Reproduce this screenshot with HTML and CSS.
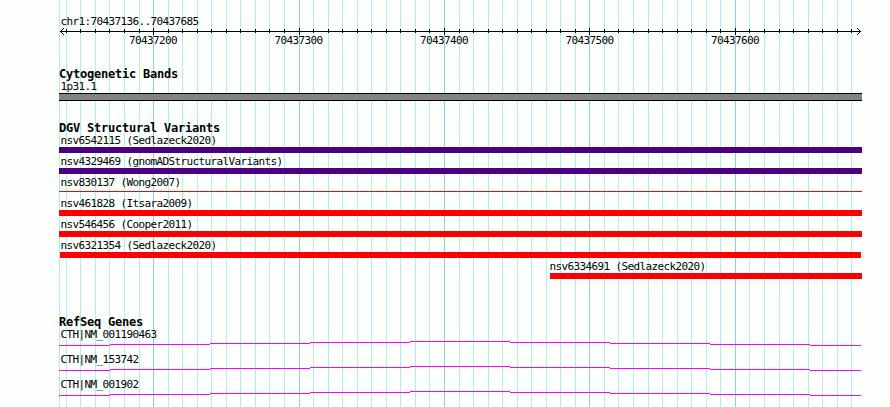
FILE: index.html
```
<!DOCTYPE html>
<html lang="en">
<head>
    <meta charset="UTF-8">
    <title>chr1:70437136..70437685</title>
    <link rel="stylesheet" href="styles.css">
</head>
<body>
    <div class="browser">
        <svg class="grid" width="890" height="407" shape-rendering="crispEdges">
            <path id="grid-minor" class="minor"/>
            <path id="grid-major" class="major"/>
        </svg>

        <div class="ruler">
            <div class="label region">chr1:70437136..70437685</div>
            <svg class="axis" width="803" height="7" shape-rendering="crispEdges">
                <path d="M1 3.5H802"/>
                <path id="ticks"/>
                <path d="M2 2.5h1M3 1.5h1M4 0.5h1M2 4.5h1M3 5.5h1M4 6.5h1"/>
                <path d="M800 2.5h1M799 1.5h1M798 0.5h1M800 4.5h1M799 5.5h1M798 6.5h1"/>
            </svg>
            <div class="tick-labels">
                <span>70437200</span>
                <span>70437300</span>
                <span>70437400</span>
                <span>70437500</span>
                <span>70437600</span>
            </div>
        </div>

        <div class="track cytobands">
            <h2>Cytogenetic Bands</h2>
            <div class="label">1p31.1</div>
            <div class="band"></div>
        </div>

        <div class="track variants">
            <h2>DGV Structural Variants</h2>
            <div class="variant gain-loss"><div class="label">nsv6542115 (Sedlazeck2020)</div><div class="bar"></div></div>
            <div class="variant gain-loss"><div class="label">nsv4329469 (gnomADStructuralVariants)</div><div class="bar"></div></div>
            <div class="variant thin"><div class="label">nsv830137 (Wong2007)</div><div class="bar"></div></div>
            <div class="variant"><div class="label">nsv461828 (Itsara2009)</div><div class="bar"></div></div>
            <div class="variant"><div class="label">nsv546456 (Cooper2011)</div><div class="bar"></div></div>
            <div class="variant inner"><div class="label">nsv6321354 (Sedlazeck2020)</div><div class="bar"></div></div>
            <div class="variant partial"><div class="label">nsv6334691 (Sedlazeck2020)</div><div class="bar"></div></div>
        </div>

        <div class="track genes">
            <h2>RefSeq Genes</h2>
            <div class="gene"><div class="label">CTH|NM_001190463</div><svg class="intron" width="803" height="5"></svg></div>
            <div class="gene"><div class="label">CTH|NM_153742</div><svg class="intron" width="803" height="5"></svg></div>
            <div class="gene"><div class="label">CTH|NM_001902</div><svg class="intron" width="803" height="5"></svg></div>
        </div>
    </div>

    <script>
        // one line every 10 bp
        const lines = [66, 80, 95, 109, 124, 139, 153, 168, 182, 197, 211, 226, 240, 255, 269,
            284, 299, 313, 328, 342, 357, 371, 386, 400, 415, 429, 444, 459, 473, 488,
            502, 517, 531, 546, 560, 575, 589, 604, 618, 633, 648, 662, 677, 691, 706,
            720, 735, 749, 764, 779, 793, 808, 822, 837, 851];
        const left = 59;
        let minor = `M${left + 0.5} 0V407`;
        let major = '';
        let ticks = '';

        lines.forEach((x, i) => {
            const isMajor = i % 10 === 6;
            const line = `M${x + 0.5} 0V407`;
            if (isMajor) {
                major += line;
            } else {
                minor += line;
            }
            ticks += `M${x - left + 0.5} ${isMajor ? '0V7' : '1V5'}`;
        });

        document.getElementById('grid-minor').setAttribute('d', minor);
        document.getElementById('grid-major').setAttribute('d', major);
        document.getElementById('ticks').setAttribute('d', ticks);

        document.querySelectorAll('.intron').forEach(svg => {
            svg.innerHTML = '<path shape-rendering="crispEdges" d="M0 4.5H51M51 3.5H151M151 2.5H251M251 1.5H351M351 0.5H451M451 1.5H551M551 2.5H651M651 3.5H751M751 4.5H802"/>';
        });
    </script>
</body>
</html>
```
FILE: styles.css
```
body {
    margin: 0;
    background-color: #fdfffc;
    color: #000;
    font-family: "DejaVu Sans Mono", monospace;
    font-size: 11px;
    letter-spacing: -0.62px;
}

.browser {
    position: relative;
    box-sizing: border-box;
    width: 890px;
    height: 407px;
    padding: 14px 28px 0 59px;
    overflow: hidden;
}

.grid {
    position: absolute;
    top: 0;
    left: 0;
    z-index: -1;
}

svg {
    display: block;
    fill: none;
}

.minor {
    stroke: #afeeee;
}

.major {
    stroke: #87ceeb;
}

.label {
    height: 14px;
    line-height: 14px;
    padding-left: 1.4px;
    white-space: nowrap;
}

.region {
    line-height: 15px;
}

.axis {
    stroke: #000;
}

.tick-labels {
    display: flex;
    gap: 97.5px;
    height: 12px;
    line-height: 12px;
    padding-left: 70px;
}

.tick-labels span {
    width: 48px;
    white-space: nowrap;
}

h2 {
    margin: 0;
    height: 13px;
    font-size: 12px;
    line-height: 14px;
    letter-spacing: -0.22px;
    white-space: nowrap;
}

.cytobands {
    margin-top: 20px;
}

.cytobands .label {
    height: 13px;
}

.band {
    box-sizing: border-box;
    height: 8px;
    border: solid #000;
    border-width: 1px 0;
    background-color: #848284;
}

.variants {
    margin-top: 20px;
}

.variants h2 {
    height: 11px;
}

.variant .label {
    height: 15px;
    line-height: 17px;
}

.bar {
    height: 6px;
    background-color: #ff0000;
}

.gain-loss .bar {
    background-color: #4b0082;
}

.thin .bar {
    height: 1px;
    margin: 2px 0 3px;
}

.inner .bar {
    margin: 0 1px;
}

.partial {
    margin-left: 491px;
}

.partial .label {
    padding-left: 0;
    text-indent: -0.6px;
}

.genes {
    margin-top: 36px;
}

.genes h2 {
    height: 12px;
}

.gene {
    margin-bottom: 6px;
}

.gene .label {
    line-height: 16px;
}

.intron {
    stroke: #ff00ff;
}
```
